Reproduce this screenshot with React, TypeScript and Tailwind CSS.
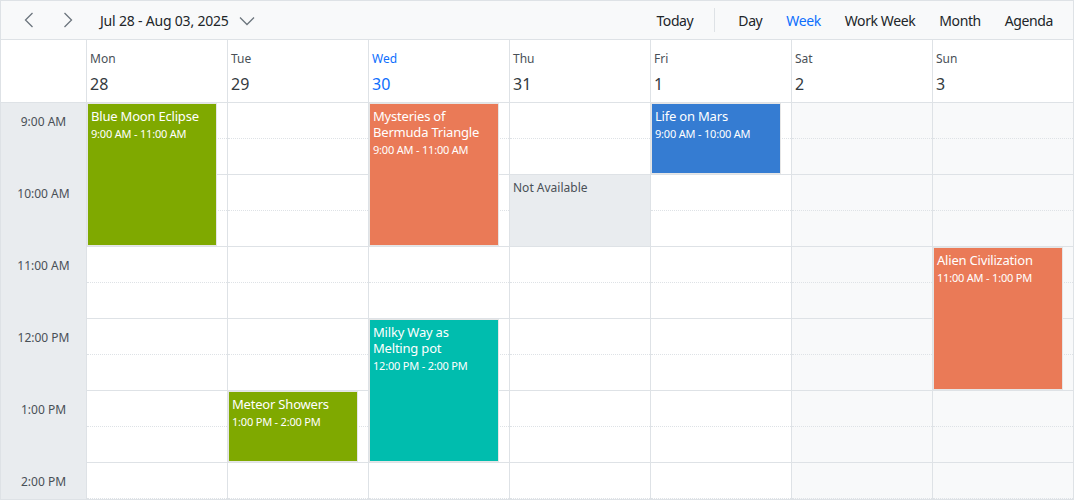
import React from "react";

type Ev = { day: number; start: number; dur: number; title: string[]; time: string; color: string };

const days = [
  { name: "Mon", date: "28" },
  { name: "Tue", date: "29" },
  { name: "Wed", date: "30", today: true },
  { name: "Thu", date: "31" },
  { name: "Fri", date: "1" },
  { name: "Sat", date: "2", weekend: true },
  { name: "Sun", date: "3", weekend: true },
];

const hours = ["9:00 AM", "10:00 AM", "11:00 AM", "12:00 PM", "1:00 PM", "2:00 PM"];

const events: Ev[] = [
  { day: 0, start: 0, dur: 2, title: ["Blue Moon Eclipse"], time: "9:00 AM - 11:00 AM", color: "#7fa900" },
  { day: 2, start: 0, dur: 2, title: ["Mysteries of", "Bermuda Triangle"], time: "9:00 AM - 11:00 AM", color: "#ea7a57" },
  { day: 4, start: 0, dur: 1, title: ["Life on Mars"], time: "9:00 AM - 10:00 AM", color: "#357cd2" },
  { day: 1, start: 4, dur: 1, title: ["Meteor Showers"], time: "1:00 PM - 2:00 PM", color: "#7fa900" },
  { day: 2, start: 3, dur: 2, title: ["Milky Way as", "Melting pot"], time: "12:00 PM - 2:00 PM", color: "#00bdae" },
  { day: 6, start: 2, dur: 2, title: ["Alien Civilization"], time: "11:00 AM - 1:00 PM", color: "#ea7a57" },
];

const font = { fontFamily: '"Noto Sans", "Open Sans", sans-serif' };

function Chevron({ dir }: { dir: "left" | "right" | "down" }) {
  if (dir === "down")
    return (
      <svg width="16" height="10" viewBox="0 0 16 10" fill="none">
        <polyline points="1,1.5 8,8.5 15,1.5" stroke="#6c757d" strokeWidth="1.3" />
      </svg>
    );
  return (
    <svg width="10" height="16" viewBox="0 0 10 16" fill="none">
      {dir === "left" ? (
        <polyline points="8.5,1 1.5,8 8.5,15" stroke="#6c757d" strokeWidth="1.3" />
      ) : (
        <polyline points="1.5,1 8.5,8 1.5,15" stroke="#6c757d" strokeWidth="1.3" />
      )}
    </svg>
  );
}

export default function App() {
  return (
    <div
      className="w-[1074px] h-[500px] border border-[#dee2e6] bg-white overflow-hidden flex flex-col text-[#212529]"
      style={font}
    >
      {/* Toolbar */}
      <div className="h-[39px] shrink-0 bg-[#f8f9fa] border-b border-[#dee2e6] flex items-center pr-[8px] text-[14px]">
        <div className="flex items-center">
          <div className="w-[20px] ml-[18px] flex justify-center">
            <Chevron dir="left" />
          </div>
          <div className="w-[20px] ml-[19px] flex justify-center">
            <Chevron dir="right" />
          </div>
          <div className="ml-[22px] flex items-center">
            <span className="tracking-[-0.2px]">Jul 28 - Aug 03, 2025</span>
            <span className="ml-[10px] mt-[1px]">
              <Chevron dir="down" />
            </span>
          </div>
        </div>
        <div className="ml-auto flex items-center tracking-[-0.4px]">
          <div className="px-3">Today</div>
          <div className="w-px h-[24px] bg-[#dee2e6] ml-[9px] mr-[11px]" />
          <div className="px-3">Day</div>
          <div className="px-3 text-[#0d6efd]">Week</div>
          <div className="px-3">Work Week</div>
          <div className="px-3">Month</div>
          <div className="px-3">Agenda</div>
        </div>
      </div>

      {/* Header row */}
      <div className="h-[63px] shrink-0 flex border-b border-[#dee2e6]">
        <div className="w-[85px] shrink-0" />
        {days.map((d) => (
          <div key={d.name} className="w-[141px] shrink-0 border-l border-[#dee2e6] pl-[3px] pt-[11px]">
            <div className={`text-[12px] leading-[16px] ${d.today ? "text-[#0d6efd]" : "text-[#495057]"}`}>{d.name}</div>
            <div className={`text-[16px] leading-[20px] mt-[7px] ${d.today ? "text-[#0d6efd]" : "text-[#343a40]"}`}>
              {d.date}
            </div>
          </div>
        ))}
      </div>

      {/* Body */}
      <div className="flex flex-1 overflow-hidden">
        <div className="w-[85px] shrink-0 bg-[#e9ecef] flex flex-col">
          {hours.map((h) => (
            <div key={h} className="h-[72px] shrink-0 text-[12px] text-[#495057] text-center pt-[11px] leading-[16px]">
              {h}
            </div>
          ))}
        </div>
        {days.map((d, di) => (
          <div
            key={d.name}
            className={`relative w-[141px] shrink-0 border-l border-[#dee2e6] flex flex-col ${
              d.weekend ? "bg-[#f8f9fa]" : "bg-white"
            }`}
          >
            {hours.map((h) => (
              <div key={h} className="h-[72px] shrink-0 border-b border-[#dee2e6] flex flex-col">
                <div className="h-[36px] shrink-0 border-b border-dotted border-[#dee2e6]" />
              </div>
            ))}
            {di === 3 && (
              <div className="absolute left-0 right-0 top-[72px] h-[71px] bg-[#e9ecef] text-[12px] text-[#495057] pl-[3px] pt-[5px] leading-[16px]">
                Not Available
              </div>
            )}
            {events
              .filter((e) => e.day === di)
              .map((e) => (
                <div
                  key={e.time + e.title[0]}
                  className="absolute left-0 w-[130px] border border-[#e6e6e6] text-white px-[3px] pt-[4px]"
                  style={{ top: e.start * 72, height: e.dur * 72 - 1, backgroundColor: e.color }}
                >
                  {e.title.map((t) => (
                    <div key={t} className="text-[13px] leading-[16px] tracking-[-0.2px]">
                      {t}
                    </div>
                  ))}
                  <div className="text-[11px] leading-[14px] mt-[3px] tracking-[-0.2px]">{e.time}</div>
                </div>
              ))}
          </div>
        ))}
      </div>
    </div>
  );
}
